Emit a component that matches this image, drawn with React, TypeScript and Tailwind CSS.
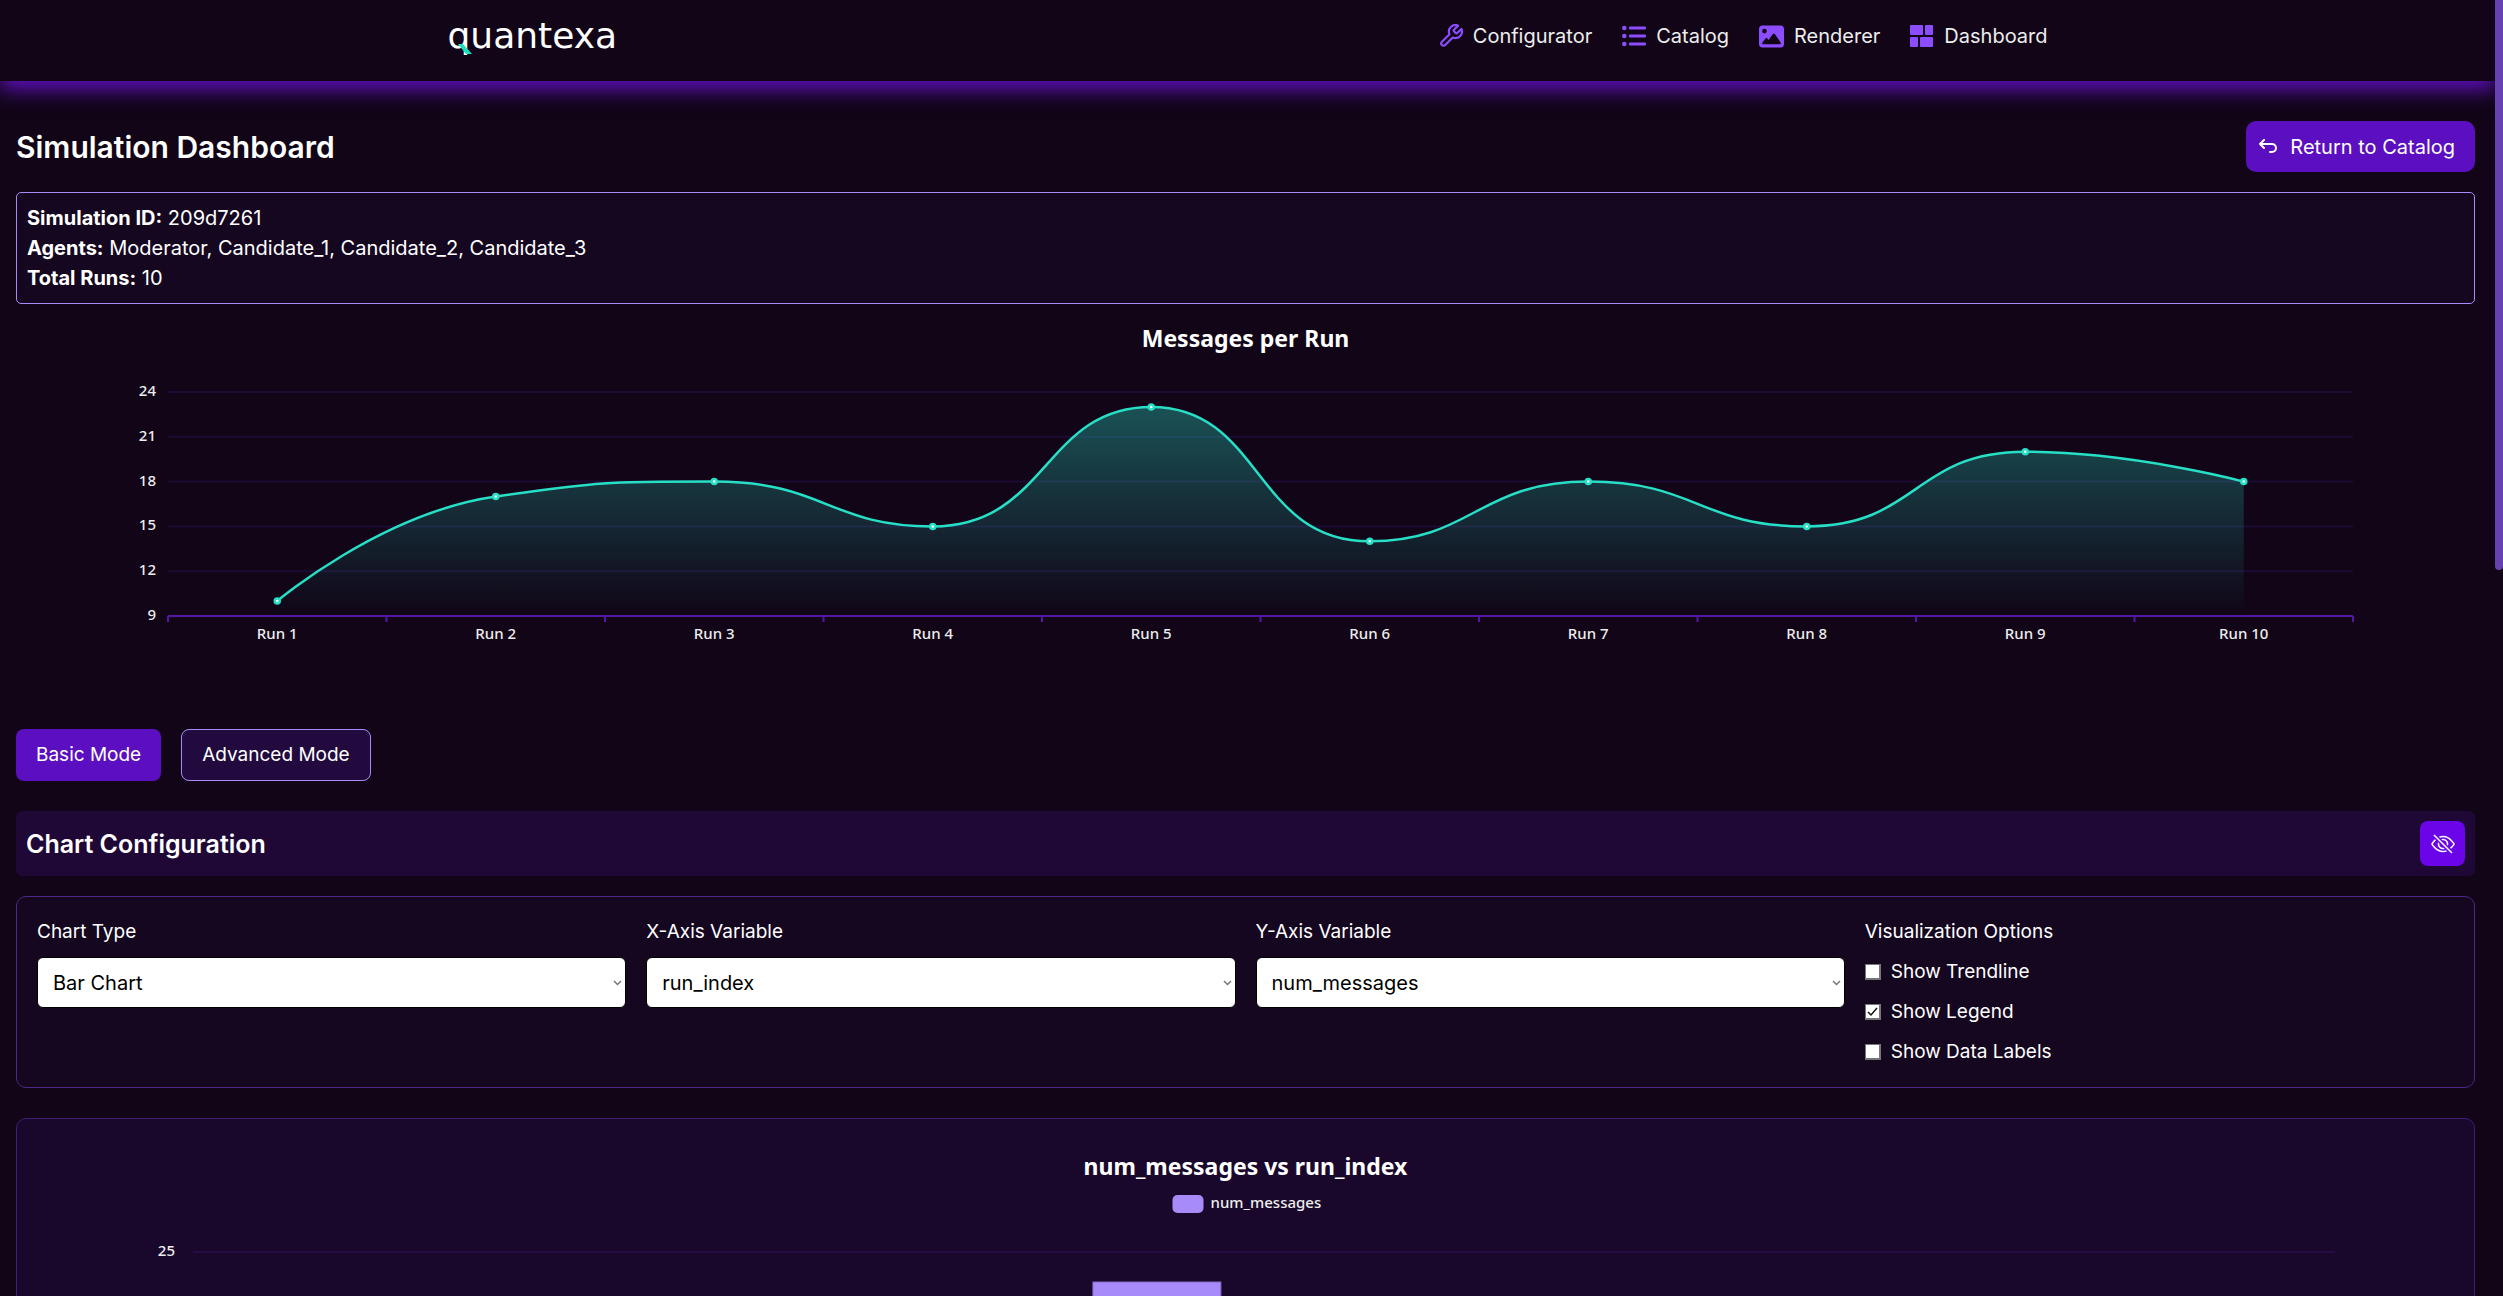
import { useLayoutEffect, useRef, useState } from "react";
import type { ReactNode } from "react";
import { BsEyeSlash } from "react-icons/bs";
import { FaImage } from "react-icons/fa6";

const runs = [10, 17, 18, 15, 23, 14, 18, 15, 20, 18];

function useWidth(initial: number) {
  const ref = useRef<HTMLDivElement>(null);
  const [width, setWidth] = useState(initial);
  useLayoutEffect(() => {
    const el = ref.current;
    if (!el) return;
    const update = () => setWidth(el.clientWidth);
    update();
    const observer = new ResizeObserver(update);
    observer.observe(el);
    return () => observer.disconnect();
  }, []);
  return { ref, width };
}

const clamp = (v: number, a: number, b: number) =>
  Math.max(Math.min(v, Math.max(a, b)), Math.min(a, b));

function smoothPath(pts: number[][]) {
  const smooth = 0.5;
  let d = `M${pts[0][0]} ${pts[0][1]}`;
  let c0 = pts[0];
  for (let i = 1; i < pts.length; i++) {
    const [x, y] = pts[i];
    const [px, py] = pts[i - 1];
    if (i === pts.length - 1) {
      d += `C${c0[0]} ${c0[1]} ${x} ${y} ${x} ${y}`;
      break;
    }
    const [nx, ny] = pts[i + 1];
    const prev = Math.hypot(x - px, y - py);
    const next = Math.hypot(nx - x, ny - y);
    const ratio = next / (next + prev);
    let ox = clamp(x + (nx - px) * smooth * ratio, nx, x);
    let oy = clamp(y + (ny - py) * smooth * ratio, ny, y);
    const ix = clamp(x - ((ox - x) * prev) / next, px, x);
    const iy = clamp(y - ((oy - y) * prev) / next, py, y);
    ox = x + ((x - ix) * next) / prev;
    oy = y + ((y - iy) * next) / prev;
    d += `C${c0[0]} ${c0[1]} ${ix} ${iy} ${x} ${y}`;
    c0 = [ox, oy];
  }
  return d;
}

const chartFont = "font-['Noto_Sans',sans-serif]";

function RunsChart() {
  const { ref, width } = useWidth(2459);
  const left = 152;
  const right = width - 122;
  const top = 76;
  const bottom = 300;
  const step = (right - left) / runs.length;
  const yOf = (v: number) => bottom - ((v - 9) / 15) * (bottom - top);
  const pts = runs.map((v, i) => [left + step * (i + 0.5), yOf(v)]);
  const line = smoothPath(pts);
  const area = `${line}L${pts[pts.length - 1][0]} ${bottom}L${pts[0][0]} ${bottom}Z`;
  return (
    <div ref={ref} className="mt-3">
      <svg className={`block h-[389px] w-full ${chartFont}`} role="img" aria-label="Messages per Run">
        <defs>
          <linearGradient id="area" gradientUnits="userSpaceOnUse" x1="0" x2="0" y1={yOf(23)} y2={bottom}>
            <stop offset="0" stopColor="#2ae0c8" stopOpacity="0.35" />
            <stop offset="1" stopColor="#2ae0c8" stopOpacity="0" />
          </linearGradient>
        </defs>
        <text x={width / 2} y="31" textAnchor="middle" className="fill-white text-[23px] font-bold">
          Messages per Run
        </text>
        {[24, 21, 18, 15, 12, 9].map((v) => (
          <g key={v}>
            {v > 9 && <path d={`M${left} ${yOf(v)}H${right}`} className="stroke-[#1c0b33]" strokeWidth="2" />}
            <text x={left - 12} y={yOf(v) + 4} textAnchor="end" className="fill-[#ededed] text-[15px] font-medium">
              {v}
            </text>
          </g>
        ))}
        <path d={area} fill="url(#area)" />
        <path d={`M${left} ${bottom}H${right}`} className="stroke-[#5317a5]" strokeWidth="2" />
        {Array.from({ length: 11 }, (_, i) => (
          <path key={i} d={`M${left + step * i} ${bottom}v6`} className="stroke-[#5317a5]" strokeWidth="2" />
        ))}
        {pts.map(([x], i) => (
          <text key={i} x={x} y="323" textAnchor="middle" className="fill-[#ededed] text-[15px] font-medium">
            {`Run ${i + 1}`}
          </text>
        ))}
        <path d={line} fill="none" className="stroke-[#27dfc6]" strokeWidth="2.5" />
        {pts.map(([x, y], i) => (
          <circle key={i} cx={x} cy={y} r="2.5" fill="#fff" className="stroke-[#27dfc6]" strokeWidth="2.5" />
        ))}
      </svg>
    </div>
  );
}

function BarsChart() {
  const { ref, width } = useWidth(2457);
  const left = 176;
  const right = width - 139;
  const top = 133;
  const unit = 15;
  const step = (right - left) / runs.length;
  const yOf = (v: number) => top + (25 - v) * unit;
  return (
    <div ref={ref}>
      <svg className={`block h-[560px] w-full ${chartFont}`} role="img" aria-label="num_messages vs run_index">
        <text x={width / 2} y="56" textAnchor="middle" className="fill-white text-[23px] font-bold">
          num_messages vs run_index
        </text>
        <rect x={width / 2 - 73} y="76" width="31" height="18" rx="5" className="fill-[#a78bfa]" />
        <text x={width / 2 - 35} y="89" className="fill-[#ededed] text-[15px] font-medium">
          num_messages
        </text>
        <path d={`M${left} ${yOf(25)}H${right}`} className="stroke-[#240c42]" strokeWidth="2" />
        <text x={left - 18} y={yOf(25) + 4} textAnchor="end" className="fill-[#ededed] text-[15px] font-medium">
          25
        </text>
        {runs.map((v, i) => (
          <rect
            key={i}
            x={left + step * (i + 0.5) - 64}
            y={yOf(v)}
            width="128"
            height={v * unit}
            className="fill-[#a78bfa] stroke-[#8468c4]"
          />
        ))}
      </svg>
    </div>
  );
}

function NavLink({ icon, children }: { icon: ReactNode; children: ReactNode }) {
  return (
    <a href="#" className="flex items-center gap-2.5 text-[#ededed]">
      <span className="text-[#8b4dff]">{icon}</span>
      {children}
    </a>
  );
}

function Select({ id, label, value }: { id: string; label: string; value: string }) {
  return (
    <div className="flex flex-col gap-2.5">
      <label htmlFor={id}>{label}</label>
      <div className="relative">
        <select
          id={id}
          defaultValue={value}
          className="block h-[51px] w-full appearance-none rounded-md border border-black bg-white px-[15px] text-xl text-black"
        >
          <option>{value}</option>
        </select>
        <svg className="pointer-events-none absolute top-[23px] right-1 h-[6px] w-[9px]" viewBox="0 0 9 6" fill="none" aria-hidden="true">
          <path d="M1 1l3.500 3.500L8 1" stroke="#767676" strokeWidth="1.500" />
        </svg>
      </div>
    </div>
  );
}

function Check({ label, checked }: { label: string; checked?: boolean }) {
  return (
    <label className="flex items-center gap-2.5">
      <span className="relative flex">
        <input
          type="checkbox"
          defaultChecked={checked}
          className="peer h-4 w-4 appearance-none border border-r-2 border-b-2 border-[#767676] bg-white"
        />
        <svg
          className="pointer-events-none absolute inset-0 hidden h-4 w-4 peer-checked:block"
          viewBox="0 0 16 16"
          fill="none"
          aria-hidden="true"
        >
          <path d="M3 8l3 3 6-7" stroke="#111" strokeWidth="1.500" />
        </svg>
      </span>
      {label}
    </label>
  );
}

export default function App() {
  return (
    <div className="flex h-screen overflow-hidden bg-[#110517] font-[Inter,sans-serif] text-xl leading-[30px] text-white">
      <div className="min-w-0 flex-1 overflow-x-hidden overflow-y-auto [scrollbar-width:none]">
        <header className="relative h-[81px] bg-[#110517] shadow-[0_8px_20px_0_#6210c4]">
          <div className="mx-auto flex h-[72px] max-w-[1600px] items-center justify-between">
            <a href="#" className="relative font-['DejaVu_Sans',sans-serif] text-[36px] leading-[48px]">
              quantexa
              <svg className="absolute bottom-1.5 left-2.5" width="14" height="10" viewBox="0 0 14 10" aria-hidden="true">
                <path d="M0 0h5l9 10H8z" fill="#1ee0c0" />
              </svg>
            </a>
            <nav className="flex items-center gap-[30px]">
              <NavLink
                icon={
                  <svg width="24" height="24" viewBox="1 1 22 22" fill="none" stroke="currentColor" strokeWidth="2" strokeLinejoin="round" aria-hidden="true">
                    <path d="M14.700 6.300a1 1 0 0 0 0 1.400l1.600 1.600a1 1 0 0 0 1.400 0l3.800-3.800a6 6 0 0 1-7.900 7.900l-6.900 6.900a2.100 2.100 0 0 1-3-3l6.900-6.900a6 6 0 0 1 7.900-7.900z" />
                  </svg>
                }
              >
                Configurator
              </NavLink>
              <NavLink
                icon={
                  <svg width="24" height="24" viewBox="0 0 24 24" fill="currentColor" aria-hidden="true">
                    <circle cx="2.300" cy="4" r="2.300" />
                    <circle cx="2.300" cy="12" r="2.300" />
                    <circle cx="2.300" cy="20" r="2.300" />
                    <rect x="7" y="2.500" width="17" height="3" rx="1" />
                    <rect x="7" y="10.500" width="17" height="3" rx="1" />
                    <rect x="7" y="18.500" width="17" height="3" rx="1" />
                  </svg>
                }
              >
                Catalog
              </NavLink>
              <NavLink icon={<FaImage size={25} />}>Renderer</NavLink>
              <NavLink
                icon={
                  <svg width="24" height="24" viewBox="0 0 24 24" fill="currentColor" aria-hidden="true">
                    <rect x="0" y="1" width="13" height="10" rx="1" />
                    <rect x="15" y="1" width="8" height="10" rx="1" />
                    <rect x="0" y="13" width="8" height="10" rx="1" />
                    <rect x="10" y="13" width="13" height="10" rx="1" />
                  </svg>
                }
              >
                Dashboard
              </NavLink>
            </nav>
          </div>
        </header>

        <main className="pt-10 pr-5 pb-10 pl-4">
          <div className="flex items-center justify-between">
            <h1 className="text-[30px] font-semibold">Simulation Dashboard</h1>
            <button className="flex h-[51px] items-center gap-3 rounded-[10px] bg-[#5b0fc0] pr-5 pl-3">
              <svg width="20" height="16" viewBox="0 0 20 16" fill="none" stroke="currentColor" strokeWidth="2" strokeLinecap="round" strokeLinejoin="round" aria-hidden="true">
                <path d="M6 1L2 5l4 4M2 5h12a4 4 0 0 1 0 8h-2" />
              </svg>
              Return to Catalog
            </button>
          </div>

          <section className="mt-5 rounded-[5px] border border-[#a78bfa] bg-[#150720] p-2.5">
            <p><strong className="font-bold">Simulation ID:</strong> 209d7261</p>
            <p><strong className="font-bold">Agents:</strong> Moderator, Candidate_1, Candidate_2, Candidate_3</p>
            <p><strong className="font-bold">Total Runs:</strong> 10</p>
          </section>

          <RunsChart />

          <div className="mt-6 flex gap-5 text-[19px]">
            <button className="h-[52px] rounded-lg bg-[#5b0fc0] px-5">Basic Mode</button>
            <button className="h-[52px] rounded-lg border border-[#a78bfa] bg-[#220a3e] px-5">Advanced Mode</button>
          </div>

          <section className="mt-[30px] flex items-center justify-between rounded-md bg-[#1f0736] p-2.5">
            <h2 className="text-[25px] font-semibold">Chart Configuration</h2>
            <button aria-label="Hide configuration" className="flex size-[45px] items-center justify-center rounded-lg bg-[#6b04e8]">
              <BsEyeSlash size={24} />
            </button>
          </section>

          <section className="mt-5 grid grid-cols-4 gap-5 rounded-[10px] border border-[#4c2889] bg-[#150720] p-5 text-[19px]">
            <Select id="chart-type" label="Chart Type" value="Bar Chart" />
            <Select id="x-axis" label="X-Axis Variable" value="run_index" />
            <Select id="y-axis" label="Y-Axis Variable" value="num_messages" />
            <fieldset>
              <legend>Visualization Options</legend>
              <div className="mt-2.5 flex flex-col gap-2.5">
                <Check label="Show Trendline" />
                <Check label="Show Legend" checked />
                <Check label="Show Data Labels" />
              </div>
            </fieldset>
          </section>

          <section className="mt-[30px] rounded-[10px] border border-[#3d1f74] bg-[#1a082c]">
            <BarsChart />
          </section>
        </main>
      </div>
      <div className="w-2" aria-hidden="true">
        <div className="h-[44%] rounded-b-full bg-[#6741b0]" />
      </div>
    </div>
  );
}
